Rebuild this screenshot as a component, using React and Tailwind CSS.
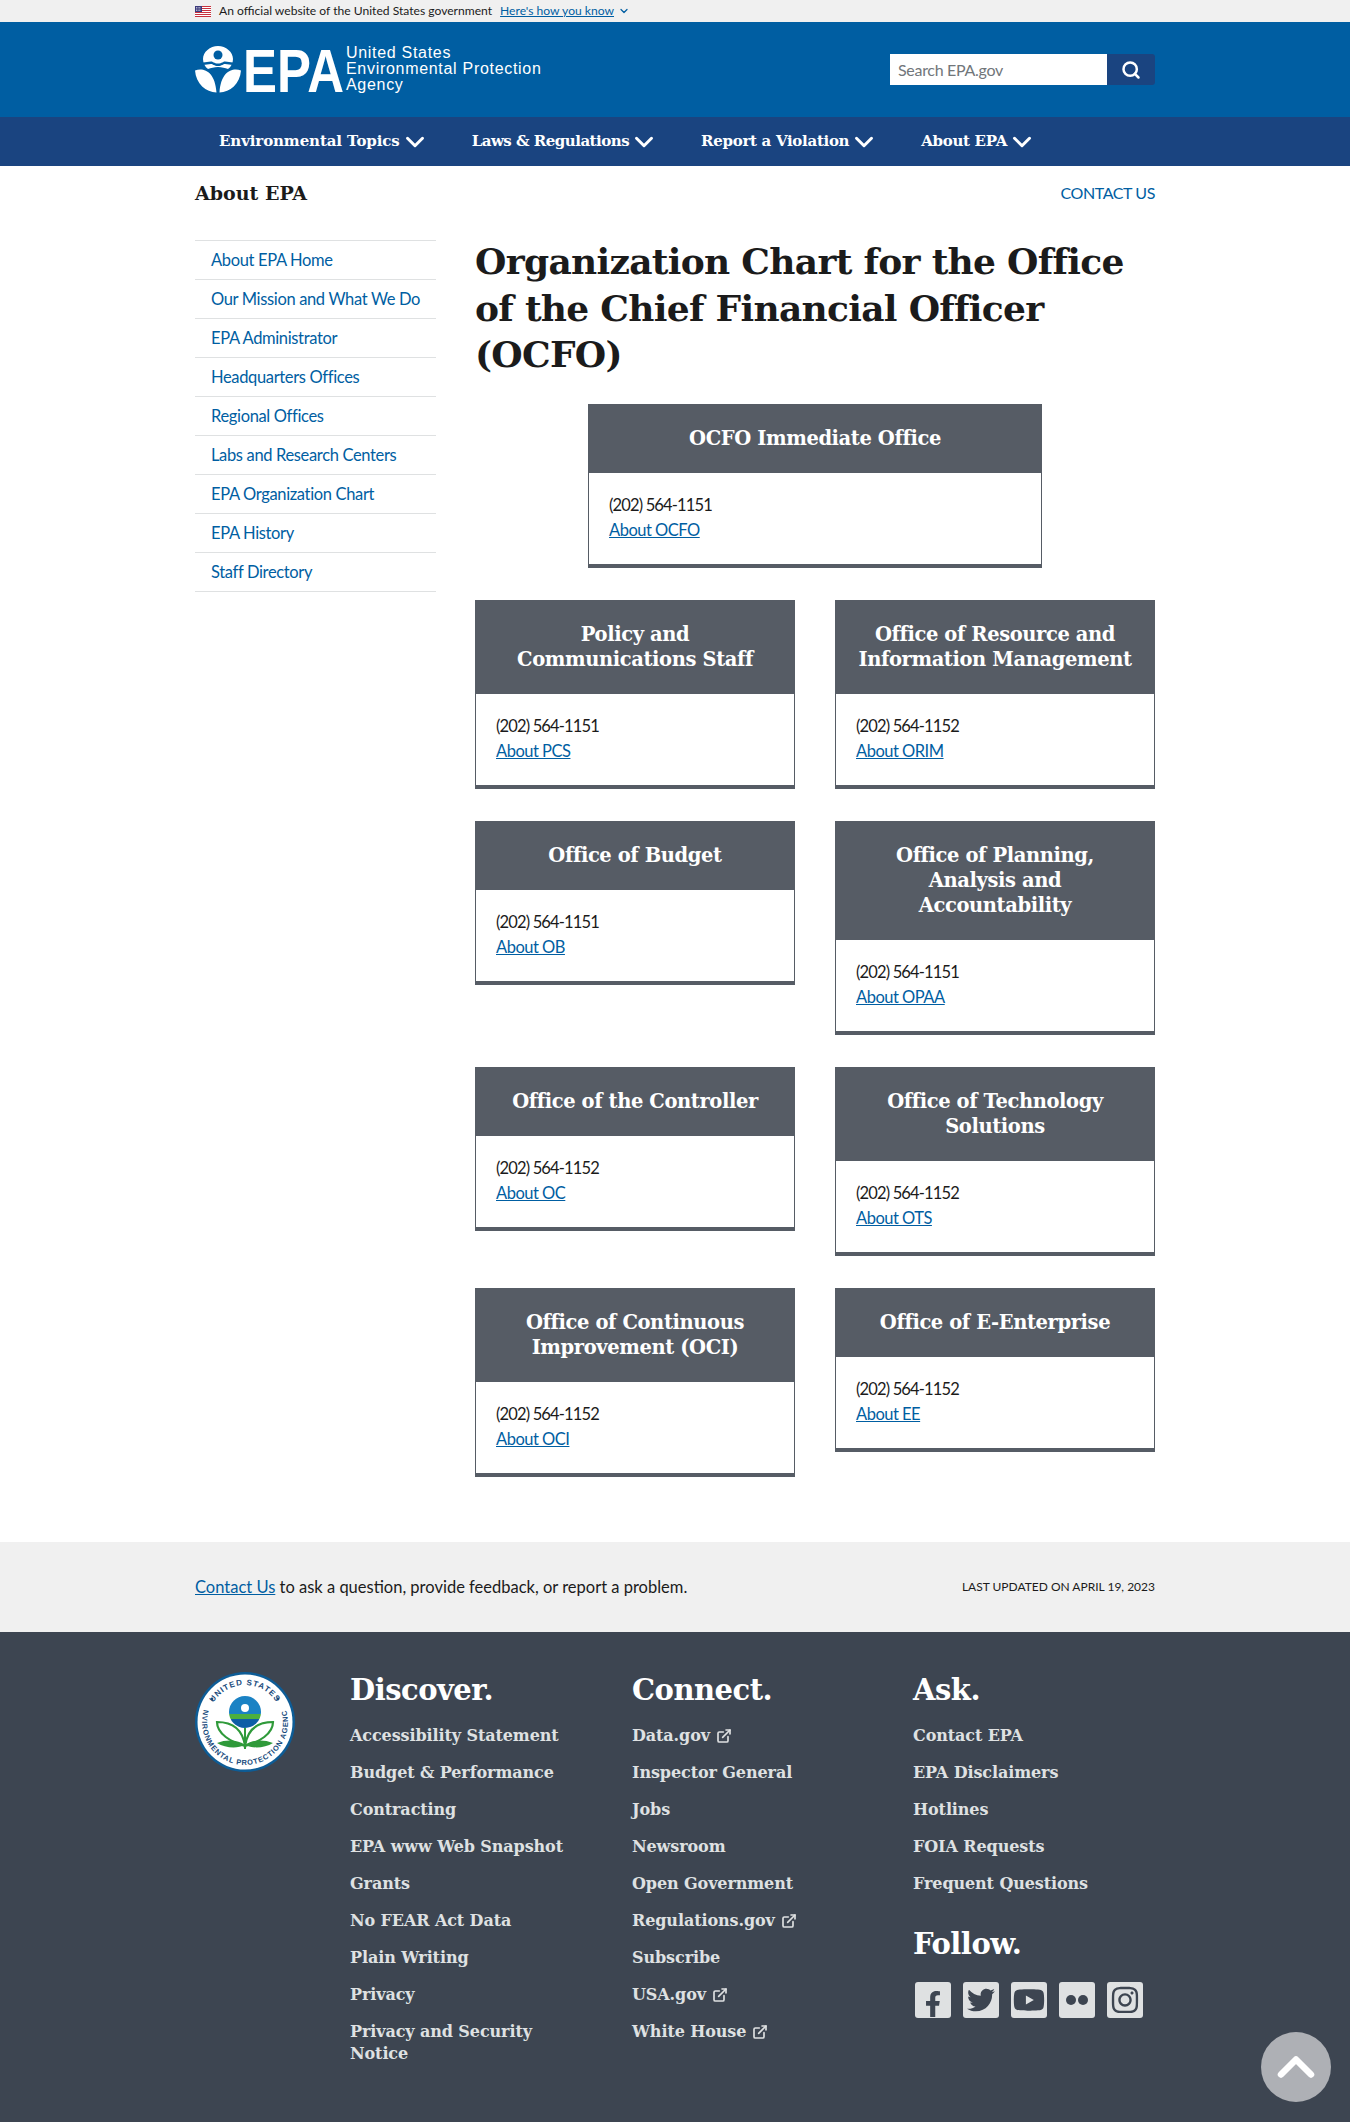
import React from "react";
import { ChevronDown, ChevronUp, ExternalLink, Search } from "lucide-react";
import { FaFacebookF, FaTwitter, FaYoutube, FaInstagram } from "react-icons/fa";

const sans = "font-['Lato','Noto_Sans',sans-serif]";
const serif = "font-['DejaVu_Serif',serif]";

const navItems = [
  { label: "Environmental Topics", tracking: "tracking-[-0.1px]" },
  { label: "Laws & Regulations", tracking: "tracking-[-0.5px]" },
  { label: "Report a Violation", tracking: "tracking-[-0.3px]" },
  { label: "About EPA", tracking: "tracking-[-0.3px]" },
];

const sideLinks = [
  "About EPA Home",
  "Our Mission and What We Do",
  "EPA Administrator",
  "Headquarters Offices",
  "Regional Offices",
  "Labs and Research Centers",
  "EPA Organization Chart",
  "EPA History",
  "Staff Directory",
];

const rows = [
  [
    { title: ["Policy and", "Communications Staff"], phone: "(202) 564-1151", link: "About PCS" },
    { title: ["Office of Resource and", "Information Management"], phone: "(202) 564-1152", link: "About ORIM" },
  ],
  [
    { title: ["Office of Budget"], phone: "(202) 564-1151", link: "About OB" },
    { title: ["Office of Planning,", "Analysis and", "Accountability"], phone: "(202) 564-1151", link: "About OPAA" },
  ],
  [
    { title: ["Office of the Controller"], phone: "(202) 564-1152", link: "About OC" },
    { title: ["Office of Technology", "Solutions"], phone: "(202) 564-1152", link: "About OTS" },
  ],
  [
    { title: ["Office of Continuous", "Improvement (OCI)"], phone: "(202) 564-1152", link: "About OCI" },
    { title: ["Office of E-Enterprise"], phone: "(202) 564-1152", link: "About EE" },
  ],
];

const discover = [
  "Accessibility Statement",
  "Budget & Performance",
  "Contracting",
  "EPA www Web Snapshot",
  "Grants",
  "No FEAR Act Data",
  "Plain Writing",
  "Privacy",
  "Privacy and Security Notice",
];

const connect = [
  { label: "Data.gov", ext: true },
  { label: "Inspector General" },
  { label: "Jobs" },
  { label: "Newsroom" },
  { label: "Open Government" },
  { label: "Regulations.gov", ext: true },
  { label: "Subscribe" },
  { label: "USA.gov", ext: true },
  { label: "White House", ext: true },
];

const ask = ["Contact EPA", "EPA Disclaimers", "Hotlines", "FOIA Requests", "Frequent Questions"];

function Flag() {
  return (
    <svg width="16" height="11" viewBox="0 0 16 11">
      <rect width="16" height="11" fill="#fff" />
      <path d="M0 .5h16M0 2.5h16M0 4.5h16M0 6.5h16M0 8.5h16M0 10.5h16" stroke="#c8313e" strokeWidth="1" />
      <rect width="7" height="6" fill="#3c3b7c" />
      <path d="M1 1.5h5M1 3h5M1 4.5h5" stroke="#fff" strokeWidth=".6" strokeDasharray="1 .6" />
    </svg>
  );
}

function EpaLogo() {
  return (
    <svg width="150" height="48" viewBox="0 0 150 48" className="shrink-0">
      <path d="M23 0c8 0 15 6 15 13 0 4-2 8-5 10-3-1-6-2-10-2s-7 1-10 2C10 21 8 17 8 13 8 6 15 0 23 0z" fill="#fff" />
      <path d="M8 16.5c3 0 5-1 8-1 2 0 3 2 7 2s5-2 7-2c3 0 5 1 8 1v2.5c-3 0-5-1-8-1-2 0-3 2-7 2s-5-2-7-2c-3 0-5 1-8 1z" fill="#005ea2" />
      <circle cx="23" cy="9" r="4.5" fill="#005ea2" />
      <path d="M0 24.5c9-3 20 1 21.5 22C11 46 1 38 0 24.5zM46 24.5c-9-3-20 1-21.5 22C35 46 45 38 46 24.5z" fill="#fff" />
      <text x="48" y="46" fontFamily="Liberation Sans, sans-serif" fontWeight="700" fontSize="61" fill="#fff" textLength="101" lengthAdjust="spacingAndGlyphs">
        EPA
      </text>
    </svg>
  );
}

function Seal() {
  return (
    <svg width="100" height="100" viewBox="0 0 100 100" className="shrink-0">
      <circle cx="50" cy="50" r="50" fill="#0d5c96" />
      <circle cx="50" cy="50" r="47.5" fill="#fff" />
      <defs>
        <path id="sealTop" d="M13 50a37 37 0 0 1 74 0" />
        <path id="sealBottom" d="M9.6 35.3a43 43 0 1 0 80.8 0" />
        <clipPath id="globeClip">
          <circle cx="50" cy="40" r="16" />
        </clipPath>
      </defs>
      <text fontFamily="Liberation Sans, sans-serif" fontWeight="700" fontSize="8" fill="#174a7c" letterSpacing="1">
        <textPath href="#sealTop" startOffset="50%" textAnchor="middle">UNITED STATES</textPath>
      </text>
      <text fontFamily="Liberation Sans, sans-serif" fontWeight="700" fontSize="7.4" fill="#174a7c" letterSpacing=".75">
        <textPath href="#sealBottom" startOffset="50%" textAnchor="middle">ENVIRONMENTAL PROTECTION AGENCY</textPath>
      </text>
      <circle cx="17" cy="27" r="1.4" fill="#174a7c" />
      <circle cx="83" cy="27" r="1.4" fill="#174a7c" />
      <g clipPath="url(#globeClip)">
        <rect x="30" y="23" width="40" height="19" fill="#1a82c4" />
        <rect x="30" y="42" width="40" height="5" fill="#4caf3f" />
        <rect x="30" y="47" width="40" height="10" fill="#0d5ea6" />
      </g>
      <circle cx="50" cy="36" r="4" fill="#fff" />
      <path d="M50 74C48 60 40 50 22 50c0 12 14 20 28 24zM50 74c2-14 10-24 28-24 0 12-14 20-28 24z" fill="none" stroke="#2f9a3a" strokeWidth="2.2" />
      <path d="M50 73c-6-5-18-6-28-2 8 5 20 6 28 2zM50 73c6-5 18-6 28-2-8 5-20 6-28 2z" fill="#2f9a3a" />
      <path d="M50 56v21" stroke="#2f9a3a" strokeWidth="2" />
    </svg>
  );
}

function Card({ title, phone, link, className = "" }) {
  return (
    <div className={`border-x border-b-4 border-[#565c65] ${className}`}>
      <h2 className={`bg-[#565c65] -mx-px px-4 py-[22px] text-center text-[19.5px] leading-[25px] font-bold text-white ${serif} tracking-[-0.4px]`}>
        {title.map((t) => (
          <span key={t} className="block">{t}</span>
        ))}
      </h2>
      <div className="px-5 pt-[20px] pb-[21px] text-[16.5px] leading-[25px] text-[#1b1b1b]">
        <p className="tracking-[-0.85px]">{phone}</p>
        <a href="#" className="text-[#005ea2] underline tracking-[-0.5px]">{link}</a>
      </div>
    </div>
  );
}

function FooterLink({ children, ext }) {
  return (
    <li className={`mb-[15px] text-[16px] leading-[22px] font-bold text-[#dfe1e2] ${serif} tracking-[-0.1px]`}>
      {children}
      {ext && <ExternalLink size={16} strokeWidth={2.5} className="inline ml-[6px] -mt-[2px]" />}
    </li>
  );
}

function Social({ children }) {
  return (
    <a href="#" className="flex h-9 w-9 items-center justify-center overflow-hidden rounded-[3px] bg-[#dfe1e2] text-[#3d4551]">
      {children}
    </a>
  );
}

export default function App() {
  return (
    <div className={`relative min-h-[2122px] bg-white ${sans}`}>
      {/* gov banner */}
      <div className="h-[22px] bg-[#f0f0f0]">
        <div className="mx-auto flex h-full w-[960px] items-center text-[12.1px] text-[#1b1b1b]">
          <Flag />
          <span className="ml-[8px]">An official website of the United States government</span>
          <a href="#" className="ml-2 text-[#005ea2] underline">Here's how you know</a>
          <ChevronDown size={12} strokeWidth={2.5} className="ml-1 text-[#005ea2]" />
        </div>
      </div>

      {/* header */}
      <header className="h-[95px] bg-[#005ea2]">
        <div className="mx-auto flex h-full w-[960px] items-center justify-between">
          <div className="flex items-center">
            <EpaLogo />
            <div className="-mt-[1px] pl-[1px] text-[16px] leading-[16px] tracking-[0.7px] text-white font-['Liberation_Sans',sans-serif]">
              United States
              <br />
              Environmental Protection
              <br />
              Agency
            </div>
          </div>
          <div className="flex h-[31px] items-stretch">
            <input
              placeholder="Search EPA.gov"
              className="w-[217px] bg-white px-2 text-[16px] tracking-[-0.3px] text-[#1b1b1b] outline-none placeholder:text-[#71767a]"
            />
            <button className="flex w-[48px] items-center justify-center rounded-r-[3px] bg-[#1a4480] text-white">
              <Search size={20} strokeWidth={3} />
            </button>
          </div>
        </div>
      </header>

      {/* main nav */}
      <nav className="h-[49px] bg-[#1a4480]">
        <div className="mx-auto flex h-full w-[960px] items-center">
          {navItems.map((item) => (
            <a key={item.label} href="#" className={`flex items-center px-6 text-[15px] font-bold text-white ${serif} ${item.tracking}`}>
              {item.label}
              <ChevronDown size={30} strokeWidth={2.4} className="-mr-[6px]" />
            </a>
          ))}
        </div>
      </nav>

      {/* page */}
      <div className="mx-auto w-[960px] pb-[65px]">
        <div className="flex h-[74px] items-start justify-between pt-[13px]">
          <h2 className={`text-[19px] leading-[28px] font-bold text-[#1b1b1b] ${serif}`}>About EPA</h2>
          <a href="#" className="text-[16px] tracking-[-0.4px] leading-[28px] text-[#005ea2]">CONTACT US</a>
        </div>

        <div className="flex items-start justify-between">
          <ul className="w-[241px] border-t border-[#dfe1e2]">
            {sideLinks.map((l) => (
              <li key={l} className="h-[39px] border-b border-[#dfe1e2] pl-4 text-[16.5px] tracking-[-0.35px] leading-[38px] text-[#005ea2]">
                <a href="#">{l}</a>
              </li>
            ))}
          </ul>

          <main className="w-[680px]">
            <h1 className={`-mt-[2px] text-[36px] leading-[46.5px] font-bold text-[#1b1b1b] ${serif} tracking-[-0.7px]`}>
              Organization Chart for the Office of the Chief Financial Officer (OCFO)
            </h1>

            <Card
              title={["OCFO Immediate Office"]}
              phone="(202) 564-1151"
              link="About OCFO"
              className="mx-auto mt-[26.5px] w-[454px]"
            />

            {rows.map((row) => (
              <div key={row[0].link} className="mt-[32px] flex items-start justify-between">
                {row.map((c) => (
                  <Card key={c.link} {...c} className="w-[320px]" />
                ))}
              </div>
            ))}
          </main>
        </div>
      </div>

      {/* last updated */}
      <div className="bg-[#f0f0f0]">
        <div className="mx-auto flex h-[90px] w-[960px] items-center justify-between text-[#1b1b1b]">
          <p className="text-[16.5px]">
            <a href="#" className="text-[#005ea2] underline">Contact Us</a> to ask a question, provide feedback, or report a problem.
          </p>
          <p className="text-[12px]">LAST UPDATED ON APRIL 19, 2023</p>
        </div>
      </div>

      {/* footer */}
      <footer className="h-[490px] bg-[#3d4551]">
        <div className="mx-auto flex w-[960px] pt-[40px]">
          <div className="w-[155px] shrink-0">
            <Seal />
          </div>
          <div className="w-[282px] shrink-0">
            <h3 className={`mb-[17px] text-[29px] leading-[36px] font-bold text-white ${serif} tracking-[-0.5px]`}>Discover.</h3>
            <ul className="w-[225px]">
              {discover.map((l) => (
                <FooterLink key={l}>{l}</FooterLink>
              ))}
            </ul>
          </div>
          <div className="w-[281px] shrink-0">
            <h3 className={`mb-[17px] text-[29px] leading-[36px] font-bold text-white ${serif} tracking-[-0.5px]`}>Connect.</h3>
            <ul>
              {connect.map((l) => (
                <FooterLink key={l.label} ext={l.ext}>{l.label}</FooterLink>
              ))}
            </ul>
          </div>
          <div>
            <h3 className={`mb-[17px] text-[29px] leading-[36px] font-bold text-white ${serif} tracking-[-0.5px]`}>Ask.</h3>
            <ul>
              {ask.map((l) => (
                <FooterLink key={l}>{l}</FooterLink>
              ))}
            </ul>
            <h3 className={`mb-[20px] mt-[31px] text-[29px] leading-[36px] font-bold text-white ${serif} tracking-[-0.5px]`}>Follow.</h3>
            <div className="flex gap-3 pl-[2px]">
              <Social><FaFacebookF size={26} className="mt-[8px]" /></Social>
              <Social><FaTwitter size={28} /></Social>
              <Social><FaYoutube size={32} /></Social>
              <Social>
                <svg width="24" height="12" viewBox="0 0 24 12">
                  <circle cx="6" cy="6" r="5" fill="#3d4551" />
                  <circle cx="18" cy="6" r="5" fill="#3d4551" />
                </svg>
              </Social>
              <Social><FaInstagram size={30} /></Social>
            </div>
          </div>
        </div>
      </footer>

      {/* back to top */}
      <a href="#" className="absolute bottom-[20px] right-[19px] flex h-[70px] w-[70px] items-center justify-center rounded-full bg-[#aeb0b5] text-white">
        <ChevronUp size={60} strokeWidth={2.6} />
      </a>
    </div>
  );
}
